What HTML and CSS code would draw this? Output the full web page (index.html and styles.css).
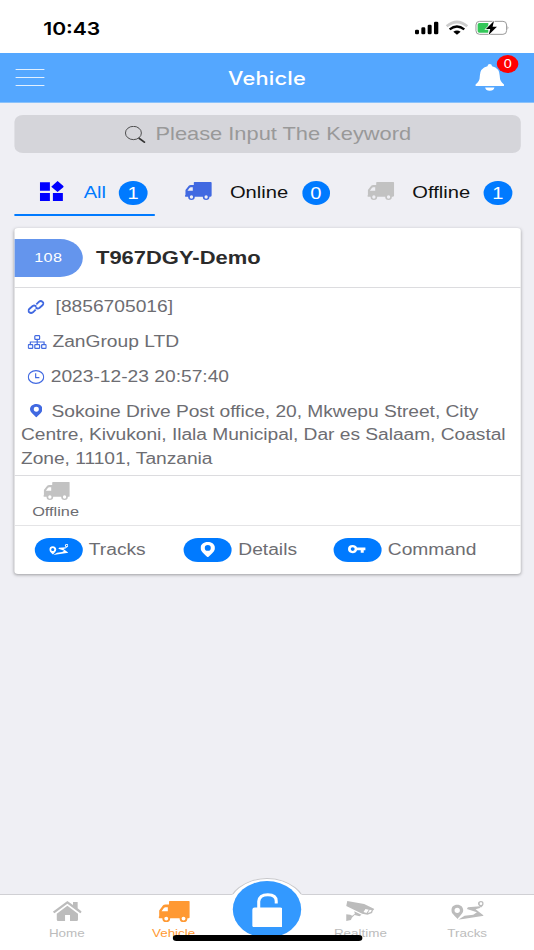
FILE: index.html
```html
<!DOCTYPE html>
<html lang="en">
<head>
<meta charset="utf-8">
<title>Vehicle</title>
<link rel="stylesheet" href="styles.css">
</head>
<body>
<svg class="defs" aria-hidden="true">
  <symbol id="truck" viewBox="0 0 81 55" preserveAspectRatio="none">
    <path fill-rule="evenodd" d="M29 0H78Q81 0 81 3V40Q81 44 77 44H74A10 10 0 1 1 54 44H30A10 10 0 1 1 10 44H3Q0 44 0 42Q0 40 2 39V24L12 11Q14 9 18 9H27V2Q27 0 29 0ZM8 26H24V16H18Q16 16 14 18ZM20 40A5 5 0 1 0 20 50A5 5 0 1 0 20 40ZM64 40A5 5 0 1 0 64 50A5 5 0 1 0 64 40Z"/>
  </symbol>
  <symbol id="pin" viewBox="0 0 42 46" preserveAspectRatio="none">
    <path fill-rule="evenodd" d="M21 0C33 0 42 8 42 18C42 28 28 38 21 46C14 38 0 28 0 18C0 8 9 0 21 0ZM21 9A8.500 8.500 0 1 0 21 26A8.500 8.500 0 1 0 21 9Z"/>
  </symbol>
  <symbol id="route" viewBox="0 0 98 56" preserveAspectRatio="none">
    <path fill-rule="evenodd" d="M18 11C29 11 36 18 36 28C36 38 24 46 19 54C13 46 0 38 0 28C0 18 7 11 18 11ZM18 20A8 8 0 1 0 18 36A8 8 0 1 0 18 20Z"/>
    <path fill-rule="evenodd" d="M89 0C94 0 98 3 98 8C98 13 92 15 89 20C86 15 80 13 80 8C80 3 84 0 89 0ZM89 4A4 4 0 1 0 89 12A4 4 0 1 0 89 4Z"/>
    <path d="M86 16L50 19L47 24L77 34L66 41L40 44L21 56L98 44L73 25L86 21Z"/>
  </symbol>
</svg>
<div class="screen">
  <div class="status">
    <span class="time">10:43</span>
    <svg class="status-icons" viewBox="0 0 290 48" preserveAspectRatio="none">
      <rect x="3" y="29" width="12" height="14" rx="4"/><rect x="22" y="22" width="12" height="21" rx="4"/><rect x="41" y="14" width="12" height="29" rx="4"/><rect x="60" y="5" width="13" height="38" rx="4"/>
      <g fill="none"><path d="M98 19Q129-7 160 19" stroke="#ccc" stroke-width="8"/><path d="M107 28Q129 11 151 28" stroke="#000" stroke-width="7"/></g>
      <path d="M118 35Q129 28 140 35L129 44Z"/>
      <rect x="186" y="4" width="92" height="39" rx="11" fill="none" stroke="#999" stroke-width="3"/>
      <path d="M281 18Q286 23 281 29Z" fill="#888"/>
      <path d="M196 9H223V38H196Q191 38 191 33V14Q191 9 196 9Z" fill="#34c759"/>
      <path d="M240 3L216 27H229L224 45L249 20H236Z" stroke="#fff" stroke-width="4" paint-order="stroke"/>
    </svg>
  </div>
  <header class="topbar">
    <div class="menu"><i></i><i></i><i></i></div>
    <h1>Vehicle</h1>
    <div class="bell">
      <svg viewBox="0 0 88 82" preserveAspectRatio="none"><path d="M44 0Q50 0 51 7Q74 13 74 36Q74 54 87 62Q89 67 83 67H5Q-1 67 1 62Q14 54 14 36Q14 13 37 7Q38 0 44 0ZM30 71H58Q56 81 44 81Q32 81 30 71Z"/></svg>
      <span class="alert">0</span>
    </div>
  </header>
  <div class="search">
    <svg viewBox="0 0 64 52" preserveAspectRatio="none"><ellipse cx="26" cy="21" rx="24" ry="20" stroke-width="2.500"/><path d="M42 36L61 50" stroke-width="5"/></svg>
    <span>Please Input The Keyword</span>
  </div>
  <nav class="tabs">
    <div class="tab all"><svg viewBox="0 0 74 61" preserveAspectRatio="none"><path d="M1 4H31V29H1ZM1 36H31V61H1ZM40 36H70V61H40ZM54 0L74 17L54 33L35 17Z"/></svg><span>All</span><b>1</b></div>
    <div class="tab online"><svg><use href="#truck"/></svg><span>Online</span><b>0</b></div>
    <div class="tab offline"><svg><use href="#truck"/></svg><span>Offline</span><b>1</b></div>
  </nav>
  <article class="card">
    <div class="card-head"><span class="tag">108</span><h2>T967DGY-Demo</h2></div>
    <div class="info">
      <p class="row link"><svg viewBox="0 0 50 42" preserveAspectRatio="none"><g fill="none" stroke="#4169e1" stroke-width="5.500"><path d="M26 13L34 5Q39 1 44 5Q50 9 45 15L35 24Q29 28 24 22"/><path d="M24 29L16 37Q10 41 5 37Q0 32 5 27L15 18Q21 14 26 20"/></g></svg>[8856705016]</p>
      <p class="row org"><svg viewBox="0 0 56 42" preserveAspectRatio="none"><g fill="none" stroke="#4169e1" stroke-width="3.500"><rect x="21" y="2" width="14" height="11" rx="2"/><rect x="2" y="29" width="13" height="11" rx="2"/><rect x="21" y="29" width="14" height="11" rx="2"/><rect x="41" y="29" width="13" height="11" rx="2"/><path d="M28 13V29M8 29V21H48V29"/></g></svg>ZanGroup LTD</p>
      <p class="row clock"><svg viewBox="0 0 50 42" preserveAspectRatio="none"><g fill="none" stroke="#4169e1" stroke-width="3.500"><ellipse cx="25" cy="21" rx="23" ry="19"/><path d="M24 10V23H35"/></g></svg>2023-12-23 20:57:40</p>
      <p class="address"><svg><use href="#pin"/></svg>Sokoine Drive Post office, 20, Mkwepu Street, City Centre, Kivukoni, Ilala Municipal, Dar es Salaam, Coastal Zone, 11101, Tanzania</p>
    </div>
    <div class="state"><div><svg><use href="#truck"/></svg><span>Offline</span></div></div>
    <div class="actions">
      <div><span class="pill"><svg class="i-route"><use href="#route"/></svg></span>Tracks</div>
      <div><span class="pill"><svg class="i-pin"><use href="#pin"/></svg></span>Details</div>
      <div><span class="pill"><svg class="i-key" viewBox="0 0 52 26" preserveAspectRatio="none"><path fill-rule="evenodd" d="M14 0Q24 0 27 8H52V16H47V24H38V16H27Q24 25 14 25Q0 25 0 12.500Q0 0 14 0ZM14 7A6 5.500 0 1 0 14 18A6 5.500 0 1 0 14 7Z"/></svg></span>Command</div>
    </div>
  </article>
  <footer class="tabbar">
    <div class="item"><svg class="n-home" viewBox="0 0 88 60" preserveAspectRatio="none"><path d="M44 0L61 12V3H75V22L88 32L83 37L44 8L5 37L0 32ZM44 14L76 38V56Q76 60 72 60H52V42H37V60H16Q12 60 12 56V38Z"/></svg><span>Home</span></div>
    <div class="item active"><svg class="n-truck"><use href="#truck"/></svg><span>Vehicle</span></div>
    <div class="middle"><div class="ring"><div class="lock"><svg viewBox="0 0 92 103" preserveAspectRatio="none"><path d="M20 45V25Q22 5 47 5Q72 5 72 24V31" fill="none" stroke="#fff" stroke-width="9"/><rect x="1" y="43" width="90" height="60" rx="7" fill="#fff"/></svg></div></div></div>
    <div class="item"><svg class="n-cam" viewBox="0 0 88 60" preserveAspectRatio="none"><path fill-rule="evenodd" d="M5 0L56 9L87 24L82 29L80 36L66 41L50 38L2 15ZM60 24L54 33L63 36L70 26ZM73 26L67 36L76 33L79 28Z"/><path d="M26 31L48 41L42 46L27 42L19 50L16 57L2 60V40L14 41L20 44L28 38Z"/></svg><span>Realtime</span></div>
    <div class="item"><svg class="n-route"><use href="#route"/></svg><span>Tracks</span></div>
  </footer>
  <div class="home-indicator"></div>
</div>
</body>
</html>
```
FILE: styles.css
```css
* { box-sizing: border-box; }
html, body { margin: 0; width: 534px; height: 950px; overflow: hidden; }
body { font-family: "Liberation Sans", Arial, sans-serif; background: #efeff4; }
h1, h2, p { margin: 0; }
svg { display: block; flex: none; }
.defs { position: absolute; width: 0; height: 0; }

/* The interface is drawn 20% wider than its layout size. */
.screen {
  position: relative; width: 445px; height: 950px;
  transform: scaleX(1.2); transform-origin: 0 0;
  display: flex; flex-direction: column;
  background: #efeff4; overflow: hidden;
}

.status {
  height: 53px; flex: none; background: #fff; padding: 3px 20px 0 36px;
  display: flex; align-items: center; justify-content: space-between;
}
.time { font: 600 17.600px Inter, sans-serif; color: #000; }
.status-icons { width: 80.500px; height: 16px; }

.topbar {
  height: 50px; flex: none; background: #54a7ff; color: #fff;
  border-bottom: 1px solid #8ac2fb; padding: 0 24.600px 0 13.300px;
  display: grid; grid-template-columns: 1fr auto 1fr; align-items: center;
}
.menu { display: grid; gap: 7px; width: 24px; }
.menu i { height: 1.300px; background: #e2f0ff; }
.topbar h1 { font: 500 18.200px Inter, sans-serif; letter-spacing: .15px; margin-left: 11.400px; }
.bell { position: relative; justify-self: end; width: 24.300px; height: 27px; }
.bell svg { width: 24.300px; height: 27px; fill: #fff; }
.alert {
  position: absolute; left: 18px; top: -9.500px; width: 18px; height: 18px;
  border-radius: 50%; background: #f00; font-size: 12px; line-height: 18px; text-align: center;
}

.search {
  flex: none; height: 38px; margin: 12px 11.500px 0; border-radius: 7px;
  background: #d5d5da; color: #999; font-size: 18.200px;
  display: flex; align-items: center; justify-content: center; gap: 8px; padding: 1px 0 0 1.500px;
}
.search svg { width: 17.700px; height: 17.300px; fill: none; stroke: #333; }

.tabs { flex: none; height: 63px; margin: 0 11.500px; display: flex; font-size: 16.800px; color: #111; }
.tab { display: flex; align-items: center; padding-top: 16px; }
.tab span { margin-left: 15px; }
.tab svg { width: 22.500px; height: 18.300px; margin-bottom: 2px; }
.tab b {
  width: 23.300px; height: 24px; border-radius: 50%; background: #007aff; color: #fff;
  font-weight: 400; text-align: center; line-height: 25px; margin-left: 11.500px;
}
.all { width: 117px; border-bottom: 2.500px solid #007aff; color: #007aff; padding-left: 21.200px; padding-top: 18px; }
.all svg { width: 20.500px; height: 20.300px; fill: #00f; margin-bottom: 3px; }
.all span { margin-left: 16.500px; }
.all b { margin-left: 11px; }
.online { width: 152px; padding-left: 25.600px; }
.online svg { fill: #4169e1; }
.offline { padding-left: 25.600px; }
.offline svg { fill: #c2c2c2; }

.card {
  flex: none; margin: 11.500px 11.500px 0; height: 346.500px; background: #fff;
  border-radius: 3px; box-shadow: 0 1px 3px rgba(0,0,0,.35); overflow: hidden;
  color: #6d6d72; font-size: 16px;
}
.card-head { height: 60.500px; border-bottom: 1px solid #dcdcdf; display: flex; align-items: center; padding-top: 2px; }
.tag {
  width: 57px; height: 38px; border-radius: 0 19px 19px 0; background: #6495ed; color: #fff;
  font-size: 13.500px; line-height: 38px; padding-left: 17px; margin-right: 11.500px; letter-spacing: .3px;
}
.card-head h2 { font-size: 18.300px; color: #2b2b2b; }
.info { height: 188px; border-bottom: 1px solid #dcdcdf; padding: 1.500px 6px 0; }
.row { height: 35px; display: flex; align-items: center; padding-left: 5px; }
.row svg { height: 14px; margin-bottom: 1px; }
.link svg { width: 14px; margin-right: 9.300px; margin-left: .5px; }
.org svg { width: 16px; margin-right: 5.200px; }
.clock svg { width: 14px; margin-right: 5.300px; margin-left: .5px; }
.address { line-height: 23.700px; padding-top: 5px; margin-right: -5px; letter-spacing: -.03px; }
.address svg { display: inline-block; width: 10.500px; height: 13.500px; margin: 0 8px 0 7px; vertical-align: -1px; fill: #4169e1; }
.state { height: 50px; border-bottom: 1.500px solid #e4e4e6; padding: 6px 0 0 15.300px; display: flex; }
.state div { display: flex; flex-direction: column; align-items: center; font-size: 13.600px; gap: 4px; }
.state svg { width: 22.500px; height: 18.300px; fill: #c2c2c2; margin-left: 1px; }
.actions { height: 47px; display: flex; padding-left: 17px; }
.actions > div { width: 124.600px; display: flex; align-items: center; gap: 5.500px; }
.pill {
  width: 40px; height: 24px; border-radius: 12px; background: #007aff; fill: #fff;
  display: flex; align-items: center; justify-content: center;
}
.i-route { width: 16px; height: 11px; }
.i-pin { width: 12.300px; height: 15.500px; }
.i-key { width: 14.500px; height: 8.500px; }

.tabbar {
  margin-top: auto; flex: none; height: 56.500px; background: #fff; border-top: 1.500px solid #d0d0d4;
  display: flex; padding: 0 11.200px; color: #bcbcbc; fill: #bcbcbc; font-size: 11.200px;
}
.item { flex: 1; display: flex; flex-direction: column; align-items: center; padding-top: 6.500px; }
.item span { margin-top: auto; margin-bottom: 10.500px; line-height: 13px; }
.active { color: #ff9933; fill: #ff9933; }
.active svg { margin-left: 1px; }
.n-home { width: 24.300px; height: 20px; }
.n-truck { width: 26.500px; height: 21.500px; }
.n-cam { width: 24.300px; height: 20px; }
.n-route { width: 27.300px; height: 18.700px; }
.middle { width: 66.700px; }
.ring {
  position: relative; width: 66.700px; height: 64px; margin-top: -17px; border-radius: 50%; background: #fff;
  display: flex; justify-content: center; align-items: center;
}
/* Only the part of the ring above the bar has an outline. */
.ring::before {
  content: ""; position: absolute; inset: 0; border-radius: 50%;
  border: 1px solid #c8c8cc; clip-path: inset(0 0 47px 0);
}
.lock {
  width: 57px; height: 57px; border-radius: 50%; background: #3399ff;
  display: flex; justify-content: center; align-items: center; padding-top: 1px;
}
.lock svg { width: 25.800px; height: 34.500px; }
.home-indicator {
  position: absolute; left: 143.500px; top: 935px; width: 158.500px; height: 5.500px;
  border-radius: 3px; background: #000;
}
```
